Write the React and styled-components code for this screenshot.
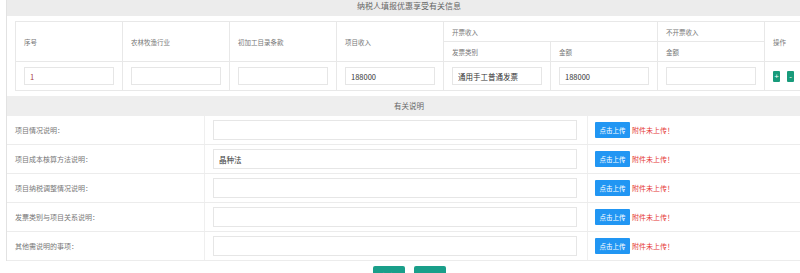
import React from 'react';
import styled, { createGlobalStyle } from 'styled-components';

const GlobalStyle = createGlobalStyle`
  html, body {
    margin: 0;
    padding: 0;
    background: #fff;
    overflow: hidden;
  }
  body {
    font-family: "Noto Sans CJK SC", "Noto Sans", sans-serif;
  }
  * { box-sizing: border-box; }
`;

const Page = styled.div`
  width: 820px;
  padding-left: 6px;
`;

const Panel = styled.div`
  width: 806px;
  border-left: 1px solid #e2e2e2;
  border-right: 1px solid #e2e2e2;
`;

const TitleBar = styled.div`
  height: 16px;
  background: #ececec;
  color: #666;
  font-size: 8px;
  line-height: 11px;
  text-align: center;
`;

const TableWrap = styled.div`
  padding: 5px 8px;
`;

const Table = styled.table`
  width: 100%;
  table-layout: fixed;
  border-collapse: collapse;
  border: 1px solid #e8e8e8;
`;

const Th = styled.th`
  height: 20px;
  padding: 0 8px;
  border: 1px solid #e8e8e8;
  font-size: 6.5px;
  font-weight: 400;
  color: #777;
  text-align: left;
  white-space: nowrap;
`;

const Td = styled.td`
  height: 29px;
  padding: 0 8px;
  border: 1px solid #e8e8e8;
`;

const Input = styled.input`
  display: block;
  width: 100%;
  height: ${({ $h }) => $h || 18}px;
  padding: 0 5px;
  border: 1px solid #e6e6e6;
  background: #fff;
  outline: none;
  font-family: inherit;
  font-size: 7.5px;
  color: ${({ $color }) => $color || '#333'};
`;

const OpButtons = styled.div`
  display: flex;
  gap: 7px;
`;

const OpButton = styled.button`
  width: 8px;
  height: 11px;
  padding: 0;
  border: none;
  border-radius: 1px;
  background: #189b7b;
  color: #fff;
  font-size: 8px;
  line-height: 11px;
  text-align: center;
`;

const SectionHeader = styled.div`
  height: 20px;
  background: #eeeeee;
  color: #666;
  font-size: 7.5px;
  line-height: 20px;
  text-align: center;
`;

const Row = styled.div`
  display: grid;
  grid-template-columns: 198px 383px 1fr;
  height: 29px;
  border-bottom: 1px solid #ececec;
`;

const LabelCell = styled.div`
  display: flex;
  align-items: center;
  padding-left: 8px;
  border-right: 1px solid #efefef;
  color: #777;
  font-size: 7px;
`;

const InputCell = styled.div`
  display: flex;
  align-items: center;
  padding: 0 10px 0 8px;
  border-right: 1px solid #efefef;
`;

const UploadCell = styled.div`
  display: flex;
  align-items: center;
  gap: 2px;
  padding-left: 7px;
`;

const UploadButton = styled.button`
  width: 35px;
  height: 16px;
  padding: 0;
  border: none;
  border-radius: 1px;
  background: #2196f3;
  color: #fff;
  font-family: inherit;
  font-size: 6.5px;
`;

const Warn = styled.span`
  color: #e53935;
  font-size: 7px;
`;

const Footer = styled.div`
  width: 806px;
  display: flex;
  justify-content: center;
  gap: 9px;
  padding-top: 5px;
`;

const FooterButton = styled.button`
  width: 32px;
  height: 20px;
  padding: 0;
  border: none;
  border-radius: 2px;
  background: #1a9f8a;
  color: #fff;
  font-family: inherit;
  font-size: 7px;
`;

const notes = [
  { label: '项目情况说明：', value: '' },
  { label: '项目成本核算方法说明：', value: '晶种法' },
  { label: '项目纳税调整情况说明：', value: '' },
  { label: '发票类别与项目关系说明：', value: '' },
  { label: '其他需说明的事项：', value: '' },
];

export default function App() {
  return (
    <Page>
      <GlobalStyle />
      <Panel>
        <TitleBar>纳税人填报优惠享受有关信息</TitleBar>
        <TableWrap>
          <Table>
            <colgroup>
              <col style={{ width: 107 }} />
              <col style={{ width: 107 }} />
              <col style={{ width: 107 }} />
              <col style={{ width: 107 }} />
              <col style={{ width: 107 }} />
              <col style={{ width: 107 }} />
              <col style={{ width: 107 }} />
              <col />
            </colgroup>
            <thead>
              <tr>
                <Th rowSpan={2}>序号</Th>
                <Th rowSpan={2}>农林牧渔行业</Th>
                <Th rowSpan={2}>初加工目录条款</Th>
                <Th rowSpan={2}>项目收入</Th>
                <Th colSpan={2}>开票收入</Th>
                <Th>不开票收入</Th>
                <Th rowSpan={2}>操作</Th>
              </tr>
              <tr>
                <Th>发票类别</Th>
                <Th>金额</Th>
                <Th>金额</Th>
              </tr>
            </thead>
            <tbody>
              <tr>
                <Td><Input defaultValue="1" $color="#a33a3a" /></Td>
                <Td><Input /></Td>
                <Td><Input /></Td>
                <Td><Input defaultValue="188000" /></Td>
                <Td><Input defaultValue="通用手工普通发票" /></Td>
                <Td><Input defaultValue="188000" /></Td>
                <Td><Input /></Td>
                <Td>
                  <OpButtons>
                    <OpButton>+</OpButton>
                    <OpButton>-</OpButton>
                  </OpButtons>
                </Td>
              </tr>
            </tbody>
          </Table>
        </TableWrap>
        <SectionHeader>有关说明</SectionHeader>
        {notes.map((n) => (
          <Row key={n.label}>
            <LabelCell>{n.label}</LabelCell>
            <InputCell><Input $h={20} defaultValue={n.value} /></InputCell>
            <UploadCell>
              <UploadButton>点击上传</UploadButton>
              <Warn>附件未上传！</Warn>
            </UploadCell>
          </Row>
        ))}
      </Panel>
      <Footer>
        <FooterButton>保存</FooterButton>
        <FooterButton>返回</FooterButton>
      </Footer>
    </Page>
  );
}
